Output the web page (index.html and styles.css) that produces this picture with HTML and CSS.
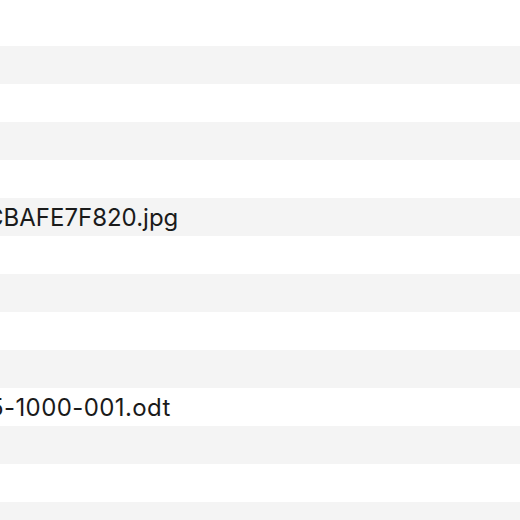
FILE: index.html
```html
<!DOCTYPE html>
<html>
<head>
<meta charset="utf-8">
<link rel="stylesheet" href="styles.css">
</head>
<body>
<div class="list">
  <div class="row"></div>
  <div class="row"></div>
  <div class="row"></div>
  <div class="row"></div>
  <div class="row"></div>
  <div class="row"><span class="name name-jpg">CBAFE7F820.jpg</span></div>
  <div class="row"></div>
  <div class="row"></div>
  <div class="row"></div>
  <div class="row"></div>
  <div class="row"><span class="name name-odt">5-1000-001.odt</span></div>
  <div class="row"></div>
  <div class="row"></div>
  <div class="row"></div>
</div>
</body>
</html>
```

FILE: styles.css
```css
html, body {
  margin: 0;
  background: #ffffff;
}
body {
  padding-top: 8px;
  overflow: hidden;
  font-family: Inter, "Noto Sans", sans-serif;
}
.list {
  display: flex;
  flex-direction: column;
}
.row {
  height: 38px;
  display: flex;
  align-items: center;
  white-space: nowrap;
  overflow: hidden;
}
.row:nth-child(even) {
  background: #f4f4f4;
}
.name {
  font-size: 24px;
  color: #1a1a1a;
}
.name-jpg {
  margin-left: -14px;
  letter-spacing: 0;
}
.name-odt {
  margin-left: -11px;
  letter-spacing: 0.4px;
}
```
